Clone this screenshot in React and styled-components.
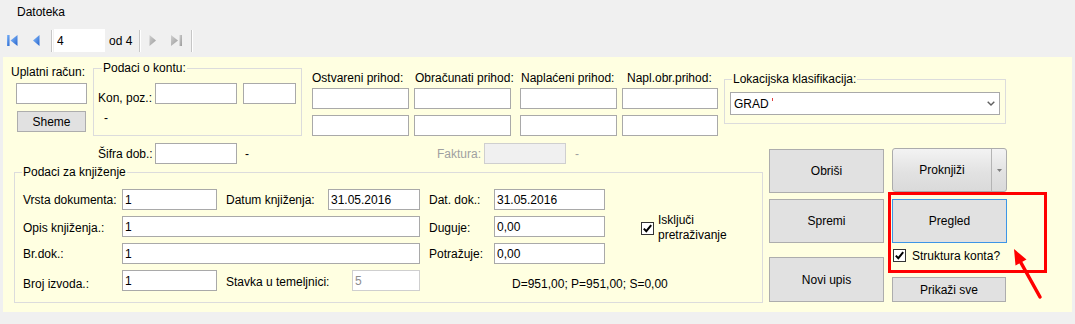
import React from 'react';
import styled, { createGlobalStyle } from 'styled-components';

const GlobalStyle = createGlobalStyle`
  html, body { margin: 0; padding: 0; background: #f0f0f0; }
  body { font-family: "Liberation Sans", Arial, sans-serif; font-size: 12px; color: #000; }
  * { box-sizing: border-box; }
`;

const FONT = `400 12px "Liberation Sans", Arial, sans-serif`;
const PANEL_BG = '#ffffe1';

const Page = styled.div`
  position: relative;
  width: 1075px;
  height: 324px;
  overflow: hidden;
  background: #f0f0f0;
`;

const MenuBar = styled.div`
  height: 24px;
  display: flex;
  align-items: center;
  padding-left: 17px;
  background: #f0f0f0;
  line-height: 14px;
`;

const Toolbar = styled.div`
  height: 33px;
  display: flex;
  align-items: center;
  background: #f0f0f0;
`;

const ToolIcon = styled.svg`
  flex: none;
  display: block;
  margin-left: ${p => p.$ml}px;
`;

const ToolSep = styled.div`
  flex: none;
  width: 1px;
  height: 22px;
  margin-left: ${p => p.$ml}px;
  background: #c6c6c6;
  box-shadow: 1px 0 0 #ffffff;
`;

const NavBox = styled.input.attrs({ readOnly: true, type: 'text' })`
  flex: none;
  width: 51px;
  height: 23px;
  margin-left: ${p => p.$ml}px;
  border: none;
  background: #fff;
  padding: 0 0 0 3px;
  font: ${FONT};
  color: #000;
  outline: none;
`;

const Panel = styled.div`
  margin: 0 3px;
  height: 255px;
  background: ${PANEL_BG};
`;

const TopRow = styled.div`
  display: flex;
  align-items: flex-start;
  height: 79px;
`;

const Column = styled.div`
  flex: none;
  display: flex;
  flex-direction: column;
  align-items: flex-start;
  width: ${p => p.$w}px;
  margin-left: ${p => p.$ml || 0}px;
  margin-top: ${p => p.$mt || 0}px;
`;

const Row = styled.div`
  display: flex;
  align-items: ${p => p.$align || 'flex-start'};
  margin-left: ${p => p.$ml || 0}px;
  margin-top: ${p => p.$mt || 0}px;
`;

const Caption = styled.span`
  display: block;
  flex: none;
  white-space: nowrap;
  line-height: 14px;
  width: ${p => (p.$w ? `${p.$w}px` : 'auto')};
  margin-left: ${p => p.$ml || 0}px;
  margin-top: ${p => p.$mt || 0}px;
  margin-bottom: ${p => p.$mb || 0}px;
  padding-left: ${p => p.$pl || 0}px;
  color: ${p => (p.$muted ? '#a0a0a0' : '#000')};
`;

const TextBox = styled.input.attrs({ readOnly: true, type: 'text' })`
  display: block;
  flex: none;
  width: ${p => p.$w}px;
  height: ${p => p.$h || 21}px;
  margin: ${p => `${p.$mt || 0}px 0 0 ${p.$ml || 0}px`};
  justify-self: ${p => (p.$end ? 'end' : 'start')};
  padding: 0 2px;
  border: 1px solid ${p => (p.$state ? '#cfcfcf' : '#a9a9a9')};
  background: ${p => (p.$state === 'disabled' ? '#f0f0f0' : '#fff')};
  color: ${p => (p.$state ? '#8d8d8d' : '#000')};
  font: ${FONT};
  outline: none;
`;

const Button = styled.button`
  display: flex;
  align-items: center;
  justify-content: center;
  flex: none;
  width: ${p => p.$w}px;
  height: ${p => p.$h}px;
  margin: ${p => `${p.$mt || 0}px 0 0 ${p.$ml || 0}px`};
  padding: 0;
  background: #e1e1e1;
  border: 1px solid ${p => (p.$focus ? '#3d95e6' : '#adadad')};
  font: ${FONT};
  color: #000;
`;

const GroupBox = styled.div`
  position: relative;
  flex: none;
  width: ${p => p.$w}px;
  height: ${p => p.$h}px;
  margin-left: ${p => p.$ml || 0}px;
  margin-top: ${p => p.$mt || 0}px;
  padding: ${p => p.$pad || '0'};
  border: 1px solid #dcdcdc;
`;

const GroupTitle = styled.span`
  position: absolute;
  top: -8px;
  left: ${p => p.$l || 7}px;
  padding: 0 1px;
  line-height: 14px;
  white-space: nowrap;
  background: ${PANEL_BG};
`;

const IncomeColumn = styled.div`
  flex: none;
  display: flex;
  flex-direction: column;
  width: ${p => p.$w}px;
  margin-right: ${p => p.$mr || 0}px;
`;

const ComboBox = styled.div`
  width: 270px;
  height: 23px;
  display: flex;
  align-items: center;
  justify-content: space-between;
  padding: 0 4px 0 3px;
  border: 1px solid #a9a9a9;
  background: #fff;
`;

const ComboText = styled.span`
  line-height: 14px;
  &::after {
    content: '';
    display: inline-block;
    width: 1px;
    height: 3px;
    margin-left: 3px;
    vertical-align: 7px;
    background: #e04040;
  }
`;

const MainRow = styled.div`
  display: flex;
  align-items: flex-start;
`;

const LeftCol = styled.div`
  flex: none;
  width: 760px;
  display: flex;
  flex-direction: column;
`;

const EntryGrid = styled.div`
  display: grid;
  grid-template-columns: 99px 95px 111px 92px 74px 111px 1fr;
  grid-template-rows: repeat(4, 21px);
  row-gap: 6px;
  align-items: start;
`;

const Span = styled.div`
  grid-column: ${p => p.$col};
  grid-row: ${p => p.$row || 'auto'};
`;

const CheckRow = styled.div`
  display: flex;
  align-items: ${p => p.$align || 'center'};
  margin-left: ${p => p.$ml || 0}px;
  margin-top: ${p => p.$mt || 0}px;
  height: ${p => (p.$h ? `${p.$h}px` : 'auto')};
`;

const CheckBox = styled.span`
  flex: none;
  width: 13px;
  height: 13px;
  margin-top: ${p => p.$mt || 0}px;
  border: 1px solid #333;
  background: #fff;
  display: flex;
  align-items: center;
  justify-content: center;
`;

const CheckLabel = styled.span`
  margin-left: ${p => p.$ml || 4}px;
  line-height: ${p => p.$lh || 14}px;
  white-space: nowrap;
`;

const ButtonArea = styled.div`
  flex: none;
  display: flex;
  gap: 8px;
  margin-left: 6px;
  margin-top: 12px;
`;

const SplitButton = styled.div`
  display: flex;
  width: 115px;
  height: 44px;
  border: 1px solid #acacac;
  border-radius: 3px;
  overflow: hidden;
  background: linear-gradient(#f3f3f3, #e2e2e2 55%, #dadada);
`;

const SplitMain = styled.div`
  width: 99px;
  display: flex;
  align-items: center;
  justify-content: center;
  border-right: 1px solid #b4b4b4;
`;

const SplitArrow = styled.div`
  flex: 1;
  display: flex;
  align-items: center;
  justify-content: center;
`;

const Annotation = styled.svg`
  position: absolute;
  left: 0;
  top: 0;
  pointer-events: none;
`;

const Check = () => (
  <svg width="11" height="11" viewBox="0 0 11 11">
    <path d="M1.8 5.6 L4.3 8.2 L9.2 2.2" fill="none" stroke="#000" strokeWidth="2" />
  </svg>
);

const BlueGrad = ({ id }) => (
  <defs>
    <linearGradient id={id} x1="0" y1="0" x2="1" y2="1">
      <stop offset="0" stopColor="#8cc1ff" />
      <stop offset="1" stopColor="#2563cc" />
    </linearGradient>
  </defs>
);

const GrayGrad = ({ id }) => (
  <defs>
    <linearGradient id={id} x1="0" y1="0" x2="1" y2="1">
      <stop offset="0" stopColor="#d0d0d0" />
      <stop offset="1" stopColor="#9a9a9a" />
    </linearGradient>
  </defs>
);

const incomes = [
  { label: 'Ostvareni prihod:', w: 97, mr: 5, pl: 0 },
  { label: 'Obračunati prihod:', w: 97, mr: 9, pl: 1 },
  { label: 'Naplaćeni prihod:', w: 97, mr: 5, pl: 1 },
  { label: 'Napl.obr.prihod:', w: 96, mr: 0, pl: 5 },
];

export default function App() {
  return (
    <Page>
      <GlobalStyle />
      <MenuBar>Datoteka</MenuBar>
      <Toolbar>
        <ToolIcon $ml={7} width="11" height="11" viewBox="0 0 11 11">
          <BlueGrad id="bg1" />
          <rect x="0" y="0" width="2.5" height="11" fill="url(#bg1)" />
          <polygon points="3.5,5.5 10.5,0 10.5,11" fill="url(#bg1)" />
        </ToolIcon>
        <ToolIcon $ml={15} width="7" height="11" viewBox="0 0 7 11">
          <BlueGrad id="bg2" />
          <polygon points="0,5.5 6.5,0 6.5,11" fill="url(#bg2)" />
        </ToolIcon>
        <ToolSep $ml={11} />
        <NavBox $ml={2} value="4" />
        <Caption $ml={4} $w={26}>od 4</Caption>
        <ToolSep $ml={4} />
        <ToolIcon $ml={9} width="7" height="11" viewBox="0 0 7 11">
          <GrayGrad id="gg1" />
          <polygon points="0.5,0 7,5.5 0.5,11" fill="url(#gg1)" />
        </ToolIcon>
        <ToolIcon $ml={15} width="11" height="11" viewBox="0 0 11 11">
          <GrayGrad id="gg2" />
          <polygon points="0,0 7,5.5 0,11" fill="url(#gg2)" />
          <rect x="8.5" y="0" width="2.5" height="11" fill="url(#gg2)" />
        </ToolIcon>
        <ToolSep $ml={9} />
      </Toolbar>

      <Panel>
        <TopRow>
          <Column $w={77} $ml={8} $mt={8}>
            <Caption>Uplatni račun:</Caption>
            <TextBox $w={71} $ml={5} $mt={4} value="" />
            <Button $w={69} $h={21} $ml={6} $mt={7}>Sheme</Button>
          </Column>

          <GroupBox $w={209} $h={68} $ml={5} $mt={11} $pad="14px 0 0 4px">
            <GroupTitle $l={8}>Podaci o kontu:</GroupTitle>
            <Row>
              <Caption $w={57} $mt={8}>Kon, poz.:</Caption>
              <TextBox $w={82} value="" />
              <TextBox $w={53} $ml={6} value="" />
            </Row>
            <Caption $ml={6} $mt={6}>-</Caption>
          </GroupBox>

          <Row $ml={10} $mt={14}>
            {incomes.map(c => (
              <IncomeColumn key={c.label} $w={c.w} $mr={c.mr}>
                <Caption $pl={c.pl} $mb={3}>{c.label}</Caption>
                <TextBox $w={c.w} value="" />
                <TextBox $w={c.w} $mt={6} value="" />
              </IncomeColumn>
            ))}
          </Row>

          <GroupBox $w={282} $h={45} $ml={6} $mt={22} $pad="12px 0 0 5px">
            <GroupTitle>Lokacijska klasifikacija:</GroupTitle>
            <ComboBox>
              <ComboText>GRAD</ComboText>
              <svg width="8" height="5" viewBox="0 0 8 5">
                <polyline points="0.7,0.7 4,4 7.3,0.7" fill="none" stroke="#606060" strokeWidth="1.4" />
              </svg>
            </ComboBox>
          </GroupBox>
        </TopRow>

        <MainRow>
          <LeftCol>
            <Row $mt={7}>
              <Caption $ml={95} $w={57} $mt={4}>Šifra dob.:</Caption>
              <TextBox $w={82} value="" />
              <Caption $ml={8} $w={10} $mt={4}>-</Caption>
              <Caption $ml={182} $w={47} $mt={4} $muted>Faktura:</Caption>
              <TextBox $w={82} $state="disabled" value="" />
              <Caption $ml={9} $mt={4} $muted>-</Caption>
            </Row>

            <GroupBox $w={749} $h={131} $ml={11} $mt={8} $pad="16px 0 0 8px">
              <GroupTitle>Podaci za knjiženje</GroupTitle>
              <EntryGrid>
                <Caption $mt={4}>Vrsta dokumenta:</Caption>
                <TextBox $w={95} value="1" />
                <Caption $pl={9} $mt={4}>Datum knjiženja:</Caption>
                <TextBox $w={92} value="31.05.2016" />
                <Caption $pl={9} $mt={4}>Dat. dok.:</Caption>
                <TextBox $w={111} value="31.05.2016" />
                <Span $col="7" $row="1" />

                <Caption $mt={5}>Opis knjiženja.:</Caption>
                <Span $col="2 / 5">
                  <TextBox $w={298} value="1" />
                </Span>
                <Caption $pl={9} $mt={5}>Duguje:</Caption>
                <TextBox $w={111} value="0,00" />
                <Span $col="7" $row="2 / span 2">
                  <CheckRow $ml={36} $mt={-3} $align="flex-start">
                    <CheckBox $mt={9}><Check /></CheckBox>
                    <CheckLabel $ml={4} $lh={15}>Isključi<br />pretraživanje</CheckLabel>
                  </CheckRow>
                </Span>

                <Caption $mt={4}>Br.dok.:</Caption>
                <Span $col="2 / 5">
                  <TextBox $w={298} value="1" />
                </Span>
                <Caption $pl={9} $mt={4}>Potražuje:</Caption>
                <TextBox $w={111} value="0,00" />

                <Caption $mt={7}>Broj izvoda.:</Caption>
                <TextBox $w={95} value="1" />
                <Caption $pl={9} $mt={5}>Stavka u temeljnici:</Caption>
                <TextBox $w={68} $end $state="readonly" value="5" />
                <Span $col="5" />
                <Span $col="6 / 8">
                  <Caption $pl={18} $mt={7}>D=951,00; P=951,00; S=0,00</Caption>
                </Span>
              </EntryGrid>
            </GroupBox>
          </LeftCol>

          <ButtonArea>
            <Column $w={115}>
              <Button $w={115} $h={44} $mt={1}>Obriši</Button>
              <Button $w={115} $h={44} $mt={6}>Spremi</Button>
              <Button $w={115} $h={45} $mt={14}>Novi upis</Button>
            </Column>
            <Column $w={115}>
              <SplitButton>
                <SplitMain>Proknjiži</SplitMain>
                <SplitArrow>
                  <svg width="5" height="3" viewBox="0 0 5 3">
                    <polygon points="0,0 5,0 2.5,3" fill="#7d7d7d" />
                  </svg>
                </SplitArrow>
              </SplitButton>
              <Button $w={115} $h={44} $mt={7} $focus>Pregled</Button>
              <CheckRow $ml={1} $mt={6} $h={13}>
                <CheckBox><Check /></CheckBox>
                <CheckLabel $ml={6}>Struktura konta?</CheckLabel>
              </CheckRow>
              <Button $w={114} $h={25} $mt={15}>Prikaži sve</Button>
            </Column>
          </ButtonArea>
        </MainRow>
      </Panel>

      <Annotation width="1075" height="324" viewBox="0 0 1075 324">
        <rect x="889.5" y="193.5" width="156" height="78" fill="none" stroke="#ff0000" strokeWidth="3" />
        <line x1="1040" y1="297" x2="1020" y2="261" stroke="#ff0000" strokeWidth="3.5" strokeLinecap="round" />
        <polygon points="1014,249 1015.5,265.5 1026.5,259.5" fill="#ff0000" />
      </Annotation>
    </Page>
  );
}
